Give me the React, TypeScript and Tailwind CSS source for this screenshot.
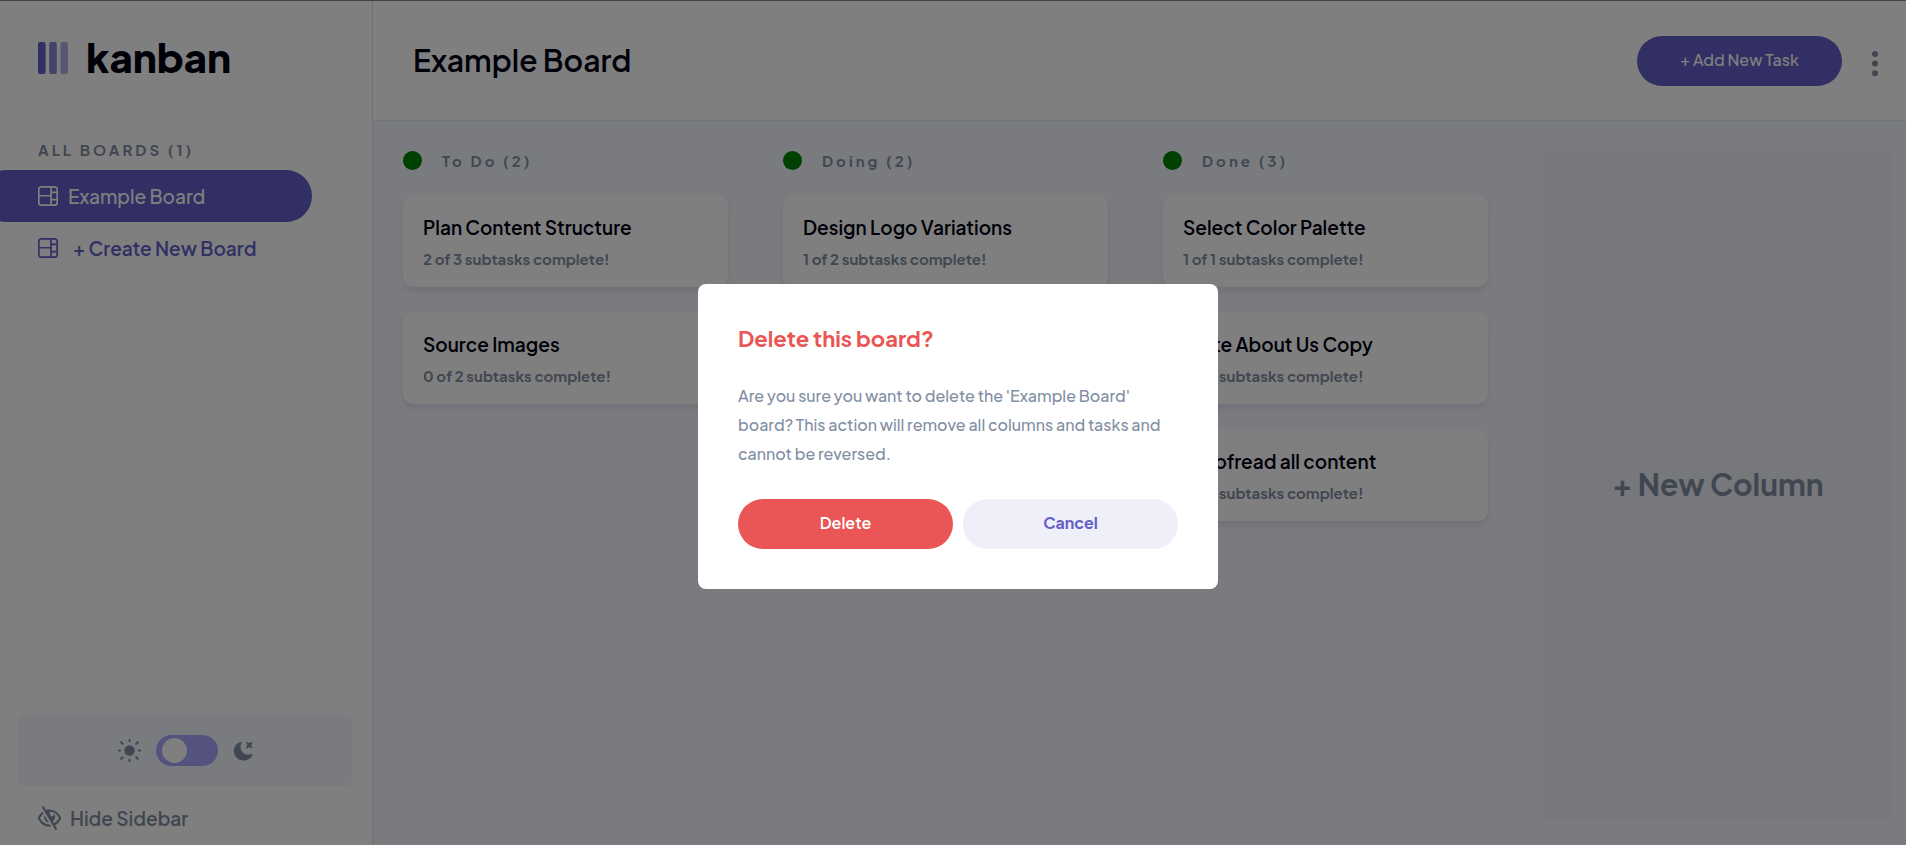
import { useState } from 'react';

type Task = { title: string; done: number; total: number };
type Column = { name: string; count: number; tasks: Task[] };

const columns: Column[] = [
  {
    name: 'To Do',
    count: 2,
    tasks: [
      { title: 'Plan Content Structure', done: 2, total: 3 },
      { title: 'Source Images', done: 0, total: 2 },
    ],
  },
  {
    name: 'Doing',
    count: 2,
    tasks: [{ title: 'Design Logo Variations', done: 1, total: 2 }],
  },
  {
    name: 'Done',
    count: 3,
    tasks: [
      { title: 'Select Color Palette', done: 1, total: 1 },
      { title: 'Write About Us Copy', done: 1, total: 1 },
      { title: 'Proofread all content', done: 1, total: 1 },
    ],
  },
];

function BoardIcon() {
  return (
    <svg viewBox="0 0 16 16" className="size-5 shrink-0" fill="currentColor" aria-hidden="true">
      <path d="M0 2.889A2.889 2.889 0 0 1 2.889 0H13.11A2.889 2.889 0 0 1 16 2.889V13.11A2.888 2.888 0 0 1 13.111 16H2.89A2.889 2.889 0 0 1 0 13.111V2.89Zm1.333 5.555v4.667c0 .859.697 1.556 1.556 1.556h6.889V8.444H1.333Zm8.445-1.333V1.333h-6.89A1.556 1.556 0 0 0 1.334 2.89V7.11h8.445Zm4.889-1.333H11.11v4.444h3.556V5.778Zm0 5.778H11.11v3.11h2a1.556 1.556 0 0 0 1.556-1.555v-1.555Zm0-7.112V2.89a1.555 1.555 0 0 0-1.556-1.556h-2v3.111h3.556Z" />
    </svg>
  );
}

function SunIcon() {
  return (
    <svg viewBox="0 0 18.34 18.34" className="size-[23px]" fill="currentColor" aria-hidden="true">
      <circle cx="9.17" cy="9.17" r="4.17" />
      <path
        d="M9.17.83v.84M9.17 16.67v.84M.83 9.17h.84M16.67 9.17h.84M2.5 2.5l1.25 1.25M14.58 14.58l1.25 1.25M2.5 15.83l1.25-1.25M14.58 3.75l1.25-1.25"
        stroke="currentColor"
        strokeWidth="1.67"
        strokeLinecap="round"
      />
    </svg>
  );
}

function MoonIcon() {
  return (
    <svg viewBox="0 0 16 16" className="size-5" fill="currentColor" aria-hidden="true">
      <path d="M6.474.682c.434-.11.718.406.481.78A6.067 6.067 0 0 0 6.01 4.72c0 3.418 2.827 6.187 6.314 6.187.89.002 1.77-.182 2.584-.54.408-.18.894.165.724.57-1.16 2.775-3.944 4.73-7.194 4.73-4.292 0-7.771-3.41-7.771-7.615 0-3.541 2.466-6.518 5.807-7.37Zm8.433.07c.442-.294.969.232.674.674l-.525.787a1.943 1.943 0 0 0 0 2.157l.525.788c.295.441-.232.968-.674.673l-.787-.525a1.943 1.943 0 0 0-2.157 0l-.786.525c-.442.295-.97-.232-.675-.673l.525-.788a1.943 1.943 0 0 0 0-2.157l-.525-.787c-.295-.442.232-.968.674-.673l.787.525a1.943 1.943 0 0 0 2.157 0Z" />
    </svg>
  );
}

function HideIcon() {
  return (
    <svg viewBox="0 0 18 16" preserveAspectRatio="none" className="h-6 w-[23px]" fill="currentColor" aria-hidden="true">
      <path d="M8.522 11.223a4.252 4.252 0 0 1-3.654-5.22l3.654 5.22ZM9 12.25A8.685 8.685 0 0 1 1.5 8a8.612 8.612 0 0 1 2.76-2.864l-.86-1.23A10.112 10.112 0 0 0 .208 7.238a1.5 1.5 0 0 0 0 1.524A10.187 10.187 0 0 0 9 13.75c.414 0 .828-.025 1.239-.074l-1-1.43A8.88 8.88 0 0 1 9 12.25Zm8.792-3.488a10.14 10.14 0 0 1-4.486 4.046l1.504 2.148a.375.375 0 0 1-.092.523l-.648.453a.375.375 0 0 1-.523-.092L3.19 1.044A.375.375 0 0 1 3.282.52L3.93.068a.375.375 0 0 1 .523.092l1.735 2.479A10.308 10.308 0 0 1 9 2.25c3.746 0 7.031 2 8.792 4.988a1.5 1.5 0 0 1 0 1.524ZM16.5 8a8.674 8.674 0 0 0-6.755-4.219A1.75 1.75 0 1 0 12.75 5v-.001a4.25 4.25 0 0 1-1.154 5.366l.834 1.192A8.641 8.641 0 0 0 16.5 8Z" />
    </svg>
  );
}

function Sidebar() {
  const [dark, setDark] = useState(false);
  return (
    <aside className="flex w-[373px] shrink-0 flex-col border-r border-[#dfe0f5] bg-white">
      <div className="flex items-center gap-[18px] pt-8 pl-[38px]">
        <svg viewBox="0 0 30 32" className="h-8 w-[30px]" fill="#635fc7" aria-hidden="true">
          <rect width="7.6" height="32" rx="2" />
          <rect x="11.2" width="7.6" height="32" rx="2" opacity=".75" />
          <rect x="22.4" width="7.6" height="32" rx="2" opacity=".5" />
        </svg>
        <span className="pb-0.5 text-[40px] leading-[48px] font-extrabold text-[#000112]">kanban</span>
      </div>
      <nav className="pt-14">
        <h2 className="pb-[9px] pl-[38px] text-[15px] leading-[22px] font-bold tracking-[3px] text-[#828fa3]">ALL BOARDS (1)</h2>
        <button className="-ml-5 flex h-[52px] w-[332px] items-center gap-2.5 rounded-full bg-[#635fc7] pl-[58px] text-[19px] font-medium text-white">
          <BoardIcon />
          Example Board
        </button>
        <button className="flex h-[52px] w-[312px] items-center gap-[15px] pl-[38px] text-[19px] font-semibold text-[#635fc7]">
          <BoardIcon />
          + Create New Board
        </button>
      </nav>
      <div className="mt-auto mr-5 ml-[18px] flex h-[71px] items-center justify-center gap-[15px] rounded-md bg-[#f4f7fd] text-[#828fa3]">
        <SunIcon />
        <input
          type="checkbox"
          role="switch"
          aria-label="Dark theme"
          checked={dark}
          onChange={(e) => setDark(e.target.checked)}
          className="h-[31px] w-[62px] appearance-none rounded-full bg-[#a8a4ff] px-1.5 py-[3px] before:block before:size-[25px] before:rounded-full before:bg-white checked:before:ml-auto"
        />
        <MoonIcon />
      </div>
      <button className="mt-4 mb-[11px] flex h-8 items-center gap-[9px] pl-[38px] text-[19px] font-semibold text-[#828fa3]">
        <HideIcon />
        Hide Sidebar
      </button>
    </aside>
  );
}

function Header() {
  return (
    <header className="flex h-[120px] items-center border-b border-[#e4ebfa] bg-white pr-7 pl-10">
      <h1 className="pb-0.5 text-[30px] leading-10 font-semibold text-[#000112]">Example Board</h1>
      <button className="ml-auto h-[50px] w-[205px] rounded-full bg-[#635fc7] pb-0.5 text-base font-medium text-white">
        + Add New Task
      </button>
      <button aria-label="Board menu" className="ml-[30px] pt-1.5 text-[#828fa3]">
        <svg viewBox="0 0 6 26" className="h-[26px] w-1.5" fill="currentColor" aria-hidden="true">
          <circle cx="3" cy="3" r="3" />
          <circle cx="3" cy="12.6" r="3" />
          <circle cx="3" cy="22.2" r="3" />
        </svg>
      </button>
    </header>
  );
}

function TaskCard({ task }: { task: Task }) {
  return (
    <li className="rounded-[10px] bg-white px-5 pt-5 pb-[18px] shadow-[0_4px_6px_rgba(54,78,126,0.12)]">
      <h3 className="text-[19px] leading-6 font-semibold text-[#000112]">{task.title}</h3>
      <p className="mt-2.5 text-[15px] leading-5 font-bold text-[#828fa3]">
        {task.done} of {task.total} subtasks complete!
      </p>
    </li>
  );
}

function DeleteDialog({ onClose }: { onClose: () => void }) {
  return (
    <div className="fixed inset-0 flex items-center justify-center bg-black/50 pt-7 pl-2.5">
      <div role="dialog" aria-modal="true" aria-labelledby="delete-title" className="w-[520px] rounded-lg bg-white px-10 pt-[39px] pb-10">
        <h2 id="delete-title" className="text-[22px] leading-[30px] font-bold text-[#ea5555]">
          Delete this board?
        </h2>
        <p className="mt-7 text-base leading-[29px] font-medium text-[#828fa3]">
          Are you sure you want to delete the 'Example Board' board? This action will remove all columns and tasks and
          cannot be reversed.
        </p>
        <div className="mt-[31px] flex gap-2.5">
          <button onClick={onClose} className="h-[50px] flex-1 rounded-full bg-[#ea5555] pb-0.5 text-base font-semibold text-white">
            Delete
          </button>
          <button onClick={onClose} className="h-[50px] flex-1 rounded-full bg-[#efeff9] pb-0.5 text-base font-bold text-[#635fc7]">
            Cancel
          </button>
        </div>
      </div>
    </div>
  );
}

export default function App() {
  const [open, setOpen] = useState(true);
  return (
    <div className="flex min-h-screen border-t border-[#828084] bg-[#f4f7fd] font-['Plus_Jakarta_Sans',Inter,sans-serif]">
      <Sidebar />
      <div className="flex min-w-0 flex-1 flex-col">
        <Header />
        <main className="flex flex-1 gap-[55px] overflow-hidden pt-[30px] pr-[13px] pb-[26px] pl-[30px]">
          {columns.map((column) => (
            <section key={column.name} className="w-[325px] shrink-0">
              <h2 className="flex h-[19px] items-center gap-5 text-[15px] leading-[19px] font-bold tracking-[3px] text-[#828fa3]">
                <span className="size-[19px] rounded-full bg-[#008000]" />
                {column.name} ({column.count})
              </h2>
              <ul className="mt-[25px] flex flex-col gap-[25px]">
                {column.tasks.map((task) => (
                  <TaskCard key={task.title} task={task} />
                ))}
              </ul>
            </section>
          ))}
          <button className="min-w-[280px] flex-1 rounded-lg bg-linear-to-b from-[#eef0f8] to-[#eff0f9] pb-0.5 text-[30px] font-bold text-[#828fa3]">
            + New Column
          </button>
        </main>
      </div>
      {open && <DeleteDialog onClose={() => setOpen(false)} />}
    </div>
  );
}
